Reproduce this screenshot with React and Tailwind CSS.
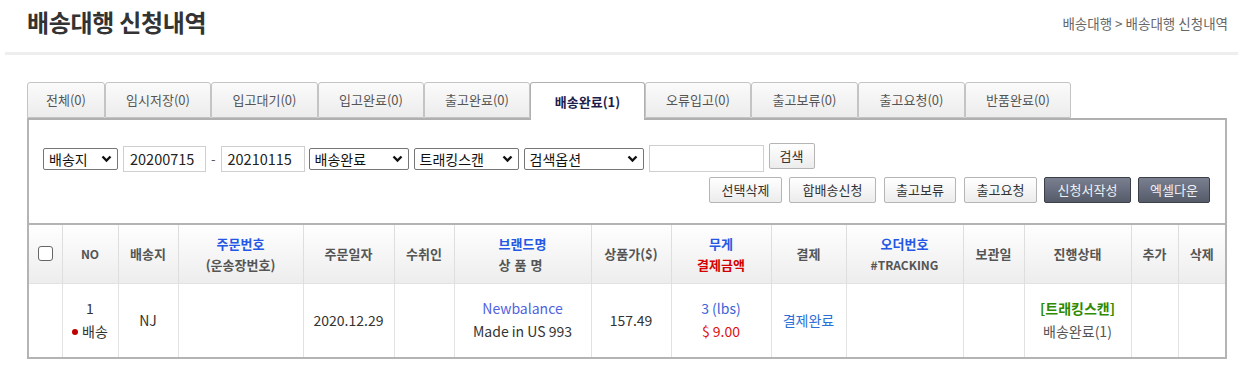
import React from 'react';

const tabs = [
  ['전체(0)', 78],
  ['임시저장(0)', 106],
  ['입고대기(0)', 107],
  ['입고완료(0)', 106],
  ['출고완료(0)', 106],
  ['배송완료(1)', 115, true],
  ['오류입고(0)', 106],
  ['출고보류(0)', 107],
  ['출고요청(0)', 107],
  ['반품완료(0)', 106],
];

const cols = [33, 56, 60, 125, 91, 60, 137, 80, 100, 75, 117, 61, 107, 47, 47];

function Chevron() {
  return (
    <svg width="11" height="8" viewBox="0 0 11 8" className="shrink-0">
      <path d="M1.5 1.5 L5.5 5.5 L9.5 1.5" fill="none" stroke="#111" strokeWidth="2.4" />
    </svg>
  );
}

function FakeSelect({ label, width }) {
  return (
    <div
      className="flex items-center justify-between h-[22px] border border-[#767676] rounded-[2px] bg-white pl-[5px] pr-[5px] text-[14px] text-[#111]"
      style={{ width }}
    >
      <span className="leading-none">{label}</span>
      <Chevron />
    </div>
  );
}

function Btn({ children, dark, width }) {
  return (
    <div
      className={
        dark
          ? 'flex items-center justify-center h-[26px] rounded-[2px] border border-[#3b3f48] bg-gradient-to-b from-[#7a8090] to-[#555b69] text-[13px] text-[#eef0f4]'
          : 'flex items-center justify-center h-[26px] rounded-[2px] border border-[#b5b5b5] bg-gradient-to-b from-white to-[#ececec] text-[13px] text-[#333]'
      }
      style={{ width }}
    >
      {children}
    </div>
  );
}

export default function App() {
  return (
    <div className="w-[1243px] h-[371px] bg-white px-[5px] font-['Noto_Sans_CJK_KR','Noto_Sans',sans-serif] overflow-hidden">
      {/* Heading */}
      <div className="flex items-end justify-between h-[55px] border-b-[3px] border-[#eeeeee] pl-[22px] pr-[10px]">
        <h1 className="text-[24px] font-bold text-[#333] leading-none mb-[18px] tracking-[-0.3px]">배송대행 신청내역</h1>
        <div className="text-[13.5px] text-[#666] leading-none mb-[22px]">배송대행 &gt; 배송대행 신청내역</div>
      </div>

      <div className="pl-[22px] pt-[27px]">
        {/* Tabs */}
        <div className="flex items-end relative z-10">
          {tabs.map(([t, w, active]) => (
            <div
              key={t}
              style={{ width: w }}
              className={
                active
                  ? 'h-[38px] -mb-[2px] flex items-center justify-center border border-b-0 border-[#b0b0b0] rounded-t-[3px] bg-white text-[13px] font-bold text-[#1d1d4d]'
                  : 'h-[36px] flex items-center justify-center border border-[#c4c4c4] rounded-t-[3px] bg-gradient-to-b from-[#fbfbfb] to-[#ececec] text-[13px] text-[#555]'
              }
            >
              {t}
            </div>
          ))}
        </div>

        {/* Panel */}
        <div className="w-[1200px] border-2 border-[#b4b4b4] border-t-[#b0b0b0]">
          <div className="pl-[14px] pr-[15px] pt-[25px] pb-[20px]">
            <div className="flex items-center">
              <FakeSelect label="배송지" width={75} />
              <div className="ml-[5px] w-[83px] h-[26px] border border-[#cfcfcf] flex items-center pl-[6px] text-[14.5px] text-[#222]">20200715</div>
              <span className="mx-[5px] text-[13px] text-[#555]">-</span>
              <div className="w-[84px] h-[26px] border border-[#cfcfcf] flex items-center pl-[6px] text-[14.5px] text-[#222]">20210115</div>
              <div className="ml-[4px]"><FakeSelect label="배송완료" width={100} /></div>
              <div className="ml-[5px]"><FakeSelect label="트래킹스캔" width={105} /></div>
              <div className="ml-[5px]"><FakeSelect label="검색옵션" width={120} /></div>
              <div className="ml-[5px] w-[115px] h-[27px] border border-[#cfcfcf]" />
              <div className="ml-[5px] -mt-[6px]"><Btn width={46}>검색</Btn></div>
            </div>
            <div className="flex justify-end gap-[7px] mt-[5px]">
              <Btn width={73}>선택삭제</Btn>
              <Btn width={87}>합배송신청</Btn>
              <div className="ml-[1px]"><Btn width={72}>출고보류</Btn></div>
              <div className="ml-[1px]"><Btn width={73}>출고요청</Btn></div>
              <Btn dark width={87}>신청서작성</Btn>
              <Btn dark width={72}>엑셀다운</Btn>
            </div>
          </div>

          <table className="w-full table-fixed border-collapse border-t-2 border-[#b4b4b4]">
            <colgroup>
              {cols.map((w, i) => (
                <col key={i} style={{ width: w }} />
              ))}
            </colgroup>
            <thead>
              <tr className="h-[59px] bg-gradient-to-b from-white to-[#ededed] text-[13px] font-bold text-[#555] leading-[21px]">
                <th className="border-r border-[#dedede]">
                  <div className="mx-auto w-[15px] h-[15px] border border-[#666] rounded-[3px] bg-white" />
                </th>
                <th className="border-r border-[#dedede] text-[12px]">NO</th>
                <th className="border-r border-[#dedede]">배송지</th>
                <th className="border-r border-[#dedede]">
                  <div className="text-[#2457e6]">주문번호</div>
                  <div>(운송장번호)</div>
                </th>
                <th className="border-r border-[#dedede]">주문일자</th>
                <th className="border-r border-[#dedede]">수취인</th>
                <th className="border-r border-[#dedede]">
                  <div className="text-[#2457e6]">브랜드명</div>
                  <div className="tracking-[4px]">상품명</div>
                </th>
                <th className="border-r border-[#dedede]">상품가($)</th>
                <th className="border-r border-[#dedede]">
                  <div className="text-[#2457e6]">무게</div>
                  <div className="text-[#d40000]">결제금액</div>
                </th>
                <th className="border-r border-[#dedede]">결제</th>
                <th className="border-r border-[#dedede]">
                  <div className="text-[#2457e6]">오더번호</div>
                  <div className="text-[12px]">#TRACKING</div>
                </th>
                <th className="border-r border-[#dedede]">보관일</th>
                <th className="border-r border-[#dedede]">진행상태</th>
                <th className="border-r border-[#dedede]">추가</th>
                <th>삭제</th>
              </tr>
            </thead>
            <tbody>
              <tr className="h-[74px] border-t border-[#e2e2e2] text-[14px] text-[#333] text-center leading-[23px]">
                <td className="border-r border-[#e2e2e2]" />
                <td className="border-r border-[#e2e2e2]">
                  <div>1</div>
                  <div className="flex items-center justify-center">
                    <span className="w-[6px] h-[6px] rounded-full bg-[#c00000] mr-[4px]" />
                    <span>배송</span>
                  </div>
                </td>
                <td className="border-r border-[#e2e2e2]">NJ</td>
                <td className="border-r border-[#e2e2e2]" />
                <td className="border-r border-[#e2e2e2]">2020.12.29</td>
                <td className="border-r border-[#e2e2e2]" />
                <td className="border-r border-[#e2e2e2]">
                  <div className="text-[#4f62e0]">Newbalance</div>
                  <div>Made in US 993</div>
                </td>
                <td className="border-r border-[#e2e2e2]">157.49</td>
                <td className="border-r border-[#e2e2e2]">
                  <div className="text-[#3a64d6]">3 (lbs)</div>
                  <div className="text-[#e01010]">$ 9.00</div>
                </td>
                <td className="border-r border-[#e2e2e2] text-[#2b6fd8]">결제완료</td>
                <td className="border-r border-[#e2e2e2]" />
                <td className="border-r border-[#e2e2e2]" />
                <td className="border-r border-[#e2e2e2]">
                  <div className="font-bold text-[#2e8a00]">[트래킹스캔]</div>
                  <div className="text-[#555]">배송완료(1)</div>
                </td>
                <td className="border-r border-[#e2e2e2]" />
                <td />
              </tr>
            </tbody>
          </table>
        </div>
      </div>
    </div>
  );
}
